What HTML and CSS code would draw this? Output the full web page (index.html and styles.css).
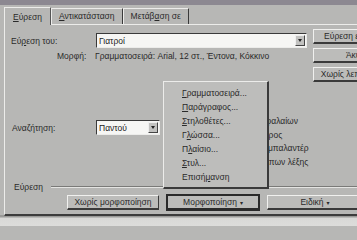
FILE: index.html
```html
<!DOCTYPE html>
<html lang="el">
<head>
<meta charset="utf-8">
<title>Εύρεση και αντικατάσταση</title>
<link rel="stylesheet" href="styles.css">
</head>
<body>
<div class="screen">
  <div class="topstrip"></div>
  <div class="dialog">
    <div class="tabs">
      <div class="tab active"><u>Ε</u>ύρεση</div>
      <div class="tab"><u>Α</u>ντικατάσταση</div>
      <div class="tab">Μετάβ<u>α</u>ση σε</div>
    </div>
    <div class="panel">
      <div class="topsec">
        <div class="main">
          <div class="row">
            <span class="lbl">Εύ<u>ρ</u>εση του:</span>
            <div class="combo wide"><span class="val">Γιατροί</span><span class="drop"><i></i></span></div>
          </div>
          <div class="fmt"><span class="fmtl">Μορφή:</span><span>Γραμματοσειρά: Arial, 12 στ., Έντονα, Κόκκινο</span></div>
        </div>
        <div class="side">
          <div class="btn sbtn">Εύρεση επομένου</div>
          <div class="btn sbtn">Άκυρο</div>
          <div class="btn sbtn">Χωρίς λεπτομέρειες</div>
        </div>
      </div>
      <div class="searchsec">
        <div class="searchrow">
          <span class="lbl2">Αναζήτηση:</span>
          <div class="combo small"><span class="val">Παντού</span><span class="drop"><i></i></span></div>
        </div>
        <div class="opts">
          <div class="opt">Ταίριασμα πεζών-κεφαλαίων</div>
          <div class="opt">Μόνο ολόκληρος ο όρος</div>
          <div class="opt">Χρήση χαρακτήρων μπαλαντέρ</div>
          <div class="opt">Εύρεση όλων των τύπων λέξης</div>
        </div>
      </div>
      <div class="group"><span>Εύρεση</span><span class="line"></span></div>
      <div class="btnrow">
        <div class="btn bb">Χωρίς μορφοποίηση</div>
        <div class="btn bb focus">Μορφοποίηση <span class="tri">▾</span></div>
        <div class="btn bb last">Ειδική <span class="tri">▾</span></div>
      </div>
    </div>
    <div class="menu">
      <div class="item"><u>Γ</u>ραμματοσειρά...</div>
      <div class="item"><u>Π</u>αράγραφος...</div>
      <div class="item"><u>Σ</u>τηλοθέτες...</div>
      <div class="item">Γ<u>λ</u>ώσσα...</div>
      <div class="item">Π<u>λ</u>αίσιο...</div>
      <div class="item"><u>Σ</u>τυλ...</div>
      <div class="item">Επισή<u>μ</u>ανση</div>
    </div>
  </div>
  <div class="foot"></div>
</div>
</body>
</html>
```
FILE: styles.css
```css
html, body {
  margin: 0;
  padding: 0;
  background: #b7b7b5;
}
.screen {
  width: 357px;
  height: 226px;
  overflow: hidden;
  position: relative;
  font-family: "Liberation Sans", "DejaVu Sans", sans-serif;
  font-size: 8.5px;
  color: #2a2a2a;
  background: #b7b7b5;
}
u { text-decoration: underline; text-underline-offset: 1px; }
.topstrip {
  height: 5px;
  background: #8c8891;
}
.dialog {
  position: relative;
  height: 210px;
  background: #b7b7b5;
}
.tabs {
  display: flex;
  align-items: flex-end;
  height: 19px;
  padding-left: 4px;
}
.tab {
  height: 15px;
  line-height: 15px;
  padding: 0 7px;
  border-top: 1px solid #ececea;
  border-left: 1px solid #ececea;
  border-right: 1px solid #3a3a3a;
}
.tab.active {
  height: 17px;
  line-height: 19px;
  padding: 0 8px;
  margin-bottom: -1px;
  position: relative;
  z-index: 1;
  background: #b7b7b5;
  border-right: 1px solid #555;
}
.panel {
  border-top: 1px solid #ececea;
  border-left: 1px solid #ececea;
  border-bottom: 2px solid #3c3c3c;
  margin-left: 4px;
  padding: 2px 0 5px 6px;
  height: 182px;
}
.topsec {
  display: flex;
  height: 55px;
}
.main {
  width: 302px;
  flex: none;
  padding-top: 6px;
}
.row {
  display: flex;
  align-items: center;
  height: 15px;
}
.lbl {
  width: 85px;
}
.combo {
  display: flex;
  align-items: center;
  height: 15px;
  box-sizing: border-box;
  background: #f6f6f4;
  border-top: 1px solid #3a3a3a;
  border-left: 1px solid #3a3a3a;
  border-right: 1px solid #ececea;
  border-bottom: 1px solid #ececea;
  padding: 0 1px 0 2px;
}
.combo .val {
  flex: 1;
  color: #1a1a1a;
}
.combo.wide { width: 211px; }
.combo.small { width: 64px; }
.drop {
  width: 10px;
  height: 11px;
  background: #c2c2c0;
  border-top: 1px solid #eee;
  border-left: 1px solid #eee;
  border-right: 1px solid #444;
  border-bottom: 1px solid #444;
  box-sizing: border-box;
  display: flex;
  align-items: center;
  justify-content: center;
}
.drop i {
  width: 0;
  height: 0;
  border-left: 2.5px solid transparent;
  border-right: 2.5px solid transparent;
  border-top: 3px solid #222;
}
.fmt {
  margin-top: 2px;
  height: 12px;
  line-height: 12px;
  padding-left: 46px;
  display: flex;
  white-space: nowrap;
}
.fmtl {
  width: 38px;
}
.side {
  flex: none;
  width: 90px;
  padding-top: 2px;
  display: flex;
  flex-direction: column;
  gap: 4px;
}
.btn {
  height: 15px;
  box-sizing: border-box;
  background: #bcbcba;
  border-top: 1px solid #f0f0ee;
  border-left: 1px solid #f0f0ee;
  border-right: 1px solid #3a3a3a;
  border-bottom: 2px solid #3a3a3a;
  display: flex;
  align-items: center;
  justify-content: center;
  white-space: nowrap;
}
.sbtn {
  width: 90px;
}
.searchsec {
  display: flex;
  margin-top: 33px;
  height: 54px;
}
.searchrow {
  display: flex;
  align-items: center;
  height: 15px;
  margin-top: 5px;
  width: 180px;
}
.lbl2 {
  width: 84px;
  padding-left: 1px;
}
.opt {
  height: 13.5px;
  line-height: 13.5px;
  white-space: nowrap;
}
.group {
  margin-top: 12px;
  height: 12px;
  display: flex;
  align-items: center;
  padding-left: 3px;
}
.group .line {
  flex: 1;
  height: 0;
  border-top: 1px solid #7a7a78;
  border-bottom: 1px solid #e4e4e2;
  margin-left: 8px;
}
.btnrow {
  display: flex;
  gap: 8px;
  margin-top: 2px;
  padding-left: 56px;
}
.bb {
  width: 92px;
  height: 15px;
  flex: none;
}
.bb.last {
  width: 96px;
}
.focus {
  outline: 1.5px solid #2a2a2a;
  outline-offset: 0;
  border-color: #2a2a2a;
}
.tri {
  font-size: 6px;
  margin-left: 3px;
}
.menu {
  position: absolute;
  left: 163px;
  top: 76px;
  width: 106px;
  height: 108px;
  box-sizing: border-box;
  padding: 4px 0;
  background: #bdbdbb;
  border-top: 1px solid #ececea;
  border-left: 1px solid #ececea;
  border-right: 2px solid #3a3a3a;
  border-bottom: 2px solid #3a3a3a;
  z-index: 5;
}
.item {
  height: 14px;
  line-height: 14px;
  padding-left: 18px;
  white-space: nowrap;
}
.foot {
  height: 11px;
  background: linear-gradient(#9a9a98 0, #9a9a98 2px, #d8d8d6 3px, #dcdcda 100%);
}
```
